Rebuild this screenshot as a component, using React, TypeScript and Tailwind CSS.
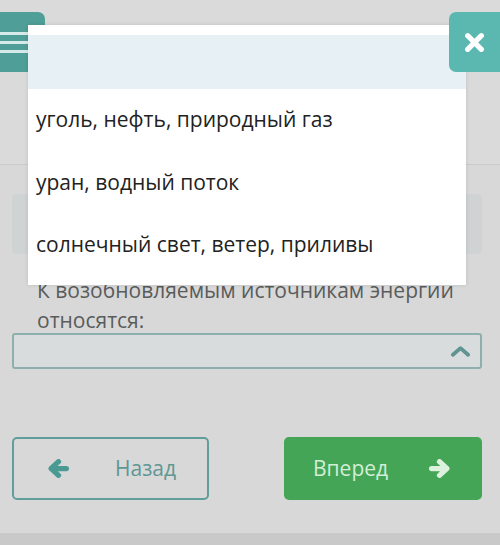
import React from "react";

function Arrow({ className, dir }: { className?: string; dir: "l" | "r" }) {
  return (
    <svg viewBox="0 0 20 18" className={className}>
      <g transform={dir === "r" ? "translate(20 0) scale(-1 1)" : undefined}>
        <path
          d="M3 9 L10 2.5 M3 9 L10 15.5 M3.5 9 L17.5 9"
          fill="none"
          stroke="currentColor"
          strokeWidth="5"
          strokeLinecap="round"
          strokeLinejoin="round"
        />
      </g>
    </svg>
  );
}

export default function App() {
  const font = { fontFamily: '"Open Sans", "Noto Sans", sans-serif' };
  return (
    <div
      className="relative w-[500px] h-[545px] overflow-hidden bg-[#d8d8d8] flex flex-col"
      style={font}
    >
      {/* header */}
      <div className="h-[165px] border-b border-[#cbcbcb] bg-[#dadada] pt-[12px] flex justify-between">
        <div className="w-[45px] h-[60px] rounded-tr-[7px] bg-[#4f9e98] flex flex-col justify-center gap-[6px]">
          <div className="w-[30px] h-[3px] bg-[#d6ebe9]" />
          <div className="w-[30px] h-[3px] bg-[#d6ebe9]" />
          <div className="w-[30px] h-[3px] bg-[#d6ebe9]" />
        </div>
      </div>

      {/* card */}
      <div className="mt-[29px] ml-[12px] mr-[18px] h-[60px] rounded-[4px] bg-[#d0d3d3]" />

      {/* question */}
      <div className="mt-[21px] px-[37px] text-[21px] leading-[30px] text-[#5a5c5c]">
        К возобновляемым источникам энергии относятся:
      </div>

      {/* select */}
      <div className="ml-[12px] mr-[18px] mt-[-2px] h-[36px] rounded-[3px] border-2 border-[#8db0ae] bg-[#d9dcdc] flex items-center justify-end pr-[10px]">
        <svg viewBox="0 0 20 12" className="w-[19px] h-[12px]">
          <path d="M2 10 L10 3 L18 10" fill="none" stroke="#5f9492" strokeWidth="4" strokeLinecap="round" strokeLinejoin="round" />
        </svg>
      </div>

      {/* buttons */}
      <div className="mt-[68px] pl-[12px] pr-[18px] flex justify-between">
        <div className="w-[197px] h-[63px] rounded-[5px] border-2 border-[#5f9e9a] flex items-center">
          <Arrow dir="l" className="ml-[34px] w-[21px] h-[19px] text-[#4a9a94]" />
          <span className="ml-[46px] text-[21px] text-[#5e9794]">Назад</span>
        </div>
        <div className="w-[198px] h-[63px] rounded-[5px] bg-[#44a556] flex items-center">
          <span className="ml-[29px] text-[21px] text-[#d3eed7]">Вперед</span>
          <Arrow dir="r" className="ml-[41px] w-[21px] h-[19px] text-[#dcf2df]" />
        </div>
      </div>

      <div className="flex-1" />
      <div className="h-[12px] bg-[#c9c9c9]" />

      {/* popup */}
      <div className="absolute left-[28px] top-[25px] w-[438px] h-[260px] bg-white pt-[10px] shadow-[0_0_4px_rgba(0,0,0,0.12)]">
        <div className="h-[54px] bg-[#e7f0f5]" />
        <div className="text-[21px] text-[#222] pl-[8px]">
          <div className="h-[62px] flex items-center">уголь, нефть, природный газ</div>
          <div className="h-[63px] flex items-center">уран, водный поток</div>
          <div className="h-[62px] flex items-center">солнечный свет, ветер, приливы</div>
        </div>
      </div>

      {/* close */}
      <div className="absolute right-0 top-[12px] w-[51px] h-[60px] rounded-l-[7px] bg-[#5bb8b0] flex items-center justify-center">
        <svg viewBox="0 0 20 20" className="w-[21px] h-[21px]">
          <path d="M3.5 3.5 L16.5 16.5 M16.5 3.5 L3.5 16.5" stroke="white" strokeWidth="5" strokeLinecap="round" />
        </svg>
      </div>
    </div>
  );
}
